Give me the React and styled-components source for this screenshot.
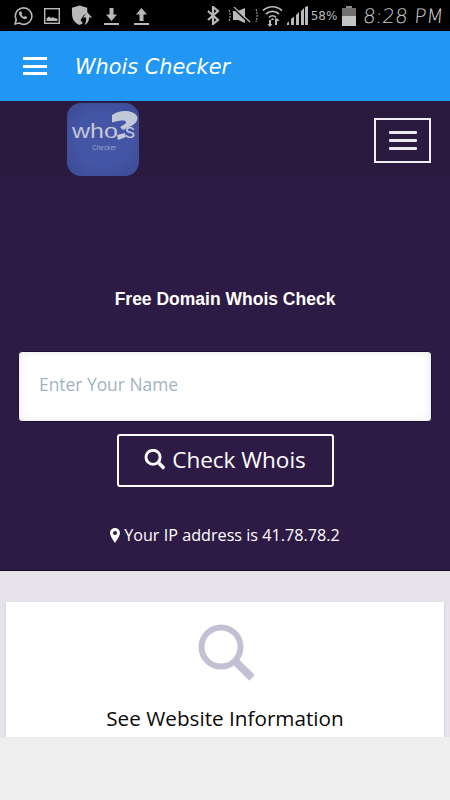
import React from "react";
import styled, { createGlobalStyle } from "styled-components";

const GlobalStyle = createGlobalStyle`
  html, body {
    margin: 0;
    padding: 0;
    background: #eeeeee;
  }
  * {
    box-sizing: border-box;
  }
`;

const Page = styled.div`
  width: 450px;
  height: 800px;
  display: flex;
  flex-direction: column;
  overflow: hidden;
  font-family: "Open Sans", "Noto Sans", sans-serif;
`;

const StatusBar = styled.div`
  height: 31px;
  flex: none;
  background: #000;
  display: flex;
  align-items: center;
  padding: 0 6px 0 13px;
  color: #b9b9b9;
`;

const StatusLeft = styled.div`
  display: flex;
  align-items: center;
  gap: 11px;
`;

const UploadSlot = styled.span`
  display: flex;
  margin-left: 4px;
`;

const StatusRight = styled.div`
  margin-left: auto;
  display: flex;
  align-items: center;
  gap: 4px;
`;

const Percent = styled.span`
  font-family: "DejaVu Sans", sans-serif;
  font-size: 12px;
  margin: 0 1px 0 -1px;
`;

const Clock = styled.span`
  font-family: "DejaVu Sans", sans-serif;
  font-size: 20px;
  font-weight: 200;
  color: #cfcfcf;
  margin-left: 3px;
  white-space: nowrap;
  transform: skewX(-5deg);
`;

const AppBar = styled.div`
  height: 70px;
  flex: none;
  background: #2196f3;
  display: flex;
  align-items: center;
  padding-left: 23px;
  gap: 28px;
`;

const MenuIcon = styled.div`
  width: 24px;
  height: 18px;
  display: flex;
  flex-direction: column;
  justify-content: space-between;
`;

const MenuLine = styled.span`
  display: block;
  height: 3px;
  background: #fff;
`;

const AppTitle = styled.div`
  font-family: "DejaVu Sans", sans-serif;
  font-style: italic;
  font-size: 20.8px;
  margin-top: 2px;
  color: #fff;
`;

const NavBar = styled.div`
  height: 75px;
  flex: none;
  background: #291a3e;
  display: flex;
  align-items: flex-start;
  justify-content: space-between;
  padding: 2px 19px 0 67px;
`;

const LogoTile = styled.div`
  width: 72px;
  height: 73px;
  border-radius: 14px;
  background: radial-gradient(circle, #4455a6 50%, #3c4a93 100%);
  overflow: hidden;
`;

const LogoWord = styled.text`
  font-family: "Liberation Sans", sans-serif;
  fill: #c3c8d8;
`;

const Toggler = styled.div`
  width: 57px;
  height: 45px;
  margin-top: 15px;
  border: 2px solid #f1eff4;
  display: flex;
  flex-direction: column;
  justify-content: center;
  align-items: center;
  gap: 5px;
`;

const TogglerLine = styled.span`
  display: block;
  width: 28px;
  height: 3px;
  border-radius: 1px;
  background: #ebe8ef;
`;

const Hero = styled.section`
  height: 395px;
  flex: none;
  background: #2d1b45;
  border-bottom: 1px solid #150c22;
  display: flex;
  flex-direction: column;
  align-items: center;
  padding: 113px 18px 0;
`;

const HeroTitle = styled.h1`
  margin: 0;
  font-family: "Liberation Sans", sans-serif;
  font-size: 17.5px;
  line-height: 20px;
  font-weight: 700;
  color: #fff;
`;

const NameInput = styled.input`
  width: 100%;
  height: 71px;
  margin-top: 42px;
  border: 1px solid #1d1030;
  border-radius: 4px;
  background: #fff;
  box-shadow: inset 0 0 8px rgba(0, 0, 0, 0.1);
  padding: 0 20px 5px;
  font-family: "Open Sans", sans-serif;
  font-size: 17.4px;
  outline: none;
  &::placeholder {
    color: #9db5c2;
    opacity: 1;
  }
`;

const CheckButton = styled.button`
  width: 217px;
  height: 53px;
  margin-top: 12px;
  background: transparent;
  border: 2px solid #fff;
  border-radius: 3px;
  color: #fff;
  display: flex;
  align-items: center;
  justify-content: center;
  gap: 7px;
  font-family: "Open Sans", sans-serif;
  font-size: 22.5px;
  padding: 0 0 3px;
`;

const IpLine = styled.p`
  margin: 37px 0 0;
  display: flex;
  align-items: center;
  gap: 4px;
  font-family: "Open Sans", sans-serif;
  font-size: 16.2px;
  line-height: 22px;
  color: #fff;
`;

const Features = styled.section`
  flex: 1;
  min-height: 0;
  overflow: hidden;
  background: #e6e3eb;
  padding: 31px 6px 0;
`;

const FeatureCard = styled.div`
  height: 200px;
  background: #fff;
  box-shadow: 0 1px 2px rgba(70, 50, 110, 0.2);
  display: flex;
  flex-direction: column;
  align-items: center;
  padding-top: 22px;
`;

const FeatureTitle = styled.h2`
  margin: 22px 0 0;
  font-family: "Open Sans", sans-serif;
  font-size: 20.7px;
  line-height: 28px;
  font-weight: 500;
  color: #0a0a0a;
`;

const BottomStrip = styled.div`
  height: 63px;
  flex: none;
  background: #eeeeee;
`;

const SearchGlyph = ({ size, color, stroke }) => (
  <svg width={size} height={size} viewBox="-2 0 58 58" fill="none">
    <circle cx="23" cy="23" r="19.5" stroke={color} strokeWidth={stroke} />
    <path d="M36 36 L54 54" stroke={color} strokeWidth={stroke + 2} />
  </svg>
);

const PinGlyph = () => (
  <svg width="10" height="15" viewBox="0 0 10 15">
    <path
      fillRule="evenodd"
      fill="#fff"
      d="M5 0C2.2 0 0 2.2 0 5c0 2.6 3.4 7.8 5 10 1.6-2.2 5-7.4 5-10 0-2.800-2.200-5-5-5zm0 3a2 2 0 1 1 0 4 2 2 0 0 1 0-4z"
    />
  </svg>
);

const Whatsapp = () => (
  <svg width="20" height="20" viewBox="0 0 20 20" fill="none" stroke="currentColor">
    <path strokeWidth="1.6" d="M2 18l1.3-4.2A8.2 8.2 0 1 1 6.2 17z" />
    <path
      fill="currentColor"
      stroke="none"
      d="M7 5.500l1.200-.2 1 2.200-.7 1c.6 1.100 1.400 1.800 2.500 2.400l1-.9 2.100 1.100-.2 1.200c-.8 1-2.200 1-3.600.4-2-.9-3.500-2.500-4.200-4.400-.4-1.100-.1-2.100.9-2.800z"
    />
  </svg>
);

const PictureBox = () => (
  <svg width="16" height="16" viewBox="0 0 16 16" fill="none">
    <rect x="0.7" y="0.7" width="14.6" height="14.6" stroke="currentColor" strokeWidth="1.4" />
    <path fill="currentColor" d="M2.500 13v-2.500l2.500-2 2 1.500 1.500-.8 3 1 2 .6V13z" />
  </svg>
);

const Shield = () => (
  <svg width="22" height="21" viewBox="0 0 23 21">
    <path fill="currentColor" d="M9 0l8 2.500v5.500l-4 2.500-3 5 2.500 3-3.500 2C4 18.500 1 15 1 8V2.500z" />
    <path fill="currentColor" d="M17 7l5 5.500h-3c0 4-2 6.500-5 8 1.400-2 2-4.500 1.700-8H12.500z" />
  </svg>
);

const Transfer = ({ up }) => (
  <svg width="15" height="18" viewBox="0 0 15 18">
    <path
      fill="currentColor"
      d={up ? "M7.500 1L13 7.500H9.500V14h-4V7.500H2z" : "M5.500 1h4v6.500H13L7.500 14 2 7.500h3.500z"}
    />
    <rect x="0" y="16" width="15" height="2" fill="currentColor" />
  </svg>
);

const Bluetooth = () => (
  <svg width="18" height="19" viewBox="0 0 18 19" fill="none" stroke="currentColor" strokeWidth="2.2">
    <path d="M2 5l10 9-5 4V1l5 4-10 9" />
  </svg>
);

const Muted = () => (
  <svg width="30" height="17" viewBox="0 0 30 17" fill="none">
    <path fill="currentColor" d="M5 4h5l7-3v15l-7-3H5z" />
    <path stroke="#000" strokeWidth="1.4" d="M5 1l16 15" />
    <path stroke="currentColor" strokeWidth="1.2" d="M6 0l16 15" />
    <path stroke="currentColor" strokeDasharray="2 1" d="M1 3c1.500 3 1.500 8 0 11M28 2c1.500 4 1.500 9 0 13" />
  </svg>
);

const Wifi = () => (
  <svg width="21" height="22" viewBox="0 0 21 22" fill="none" stroke="currentColor" strokeWidth="1.7">
    <path d="M1 5.500c5.500-5 13.500-5 19 0M4 9c3.800-3.400 9.200-3.400 13 0M7 12.300c2-1.800 5-1.800 7 0" />
    <path fill="currentColor" stroke="none" d="M10.500 13l2 2h-4zM7 15h2v4h1.500L8 22l-2.500-3H7zM13 13.500h2v-.500l2.500 3H15v4h-2z" />
  </svg>
);

const Signal = () => (
  <svg width="21" height="19" viewBox="0 0 21 19">
    <path fill="currentColor" d="M0 19v-2l2-1.500V19zM4 19v-6l3-2.500V19zM9 19V9l3-3v13zM14 19V5l3-3v17zM18 19V1l3-1v19z" />
  </svg>
);

const Battery = () => (
  <svg width="14" height="20" viewBox="0 0 14 20">
    <rect x="4" y="0" width="6" height="2" fill="#8a8a8a" />
    <rect x="0" y="2" width="14" height="8" fill="#6f6f6f" />
    <rect x="0" y="10" width="14" height="10" fill="#c4c4c4" />
  </svg>
);

const WhoisLogo = () => (
  <svg width="72" height="73" viewBox="0 0 72 73">
    <LogoWord x="5" y="35" fontSize="20" textLength="46" lengthAdjust="spacingAndGlyphs">who</LogoWord>
    <LogoWord x="58" y="35" fontSize="20">s</LogoWord>
    <path fill="#c3c8d8" d="M45 12c8-6 21-5 25 1 2 5-3 9-8 11l-6 3-3-3 5-3c2-1.500 1-3.500-2-3.500-3 0-6 .5-11 2z" />
    <path fill="#c3c8d8" d="M50 32l8-2 1 4-8 3z" />
    <LogoWord x="25" y="47" fontSize="6.500" fillOpacity="0.7">Checker</LogoWord>
  </svg>
);

export default function App() {
  return (
    <Page>
      <GlobalStyle />
      <StatusBar>
        <StatusLeft>
          <Whatsapp />
          <PictureBox />
          <Shield />
          <Transfer />
          <UploadSlot>
            <Transfer up />
          </UploadSlot>
        </StatusLeft>
        <StatusRight>
          <Bluetooth />
          <Muted />
          <Wifi />
          <Signal />
          <Percent>58%</Percent>
          <Battery />
          <Clock>8:28 PM</Clock>
        </StatusRight>
      </StatusBar>
      <AppBar>
        <MenuIcon>
          <MenuLine />
          <MenuLine />
          <MenuLine />
        </MenuIcon>
        <AppTitle>Whois Checker</AppTitle>
      </AppBar>
      <NavBar>
        <LogoTile>
          <WhoisLogo />
        </LogoTile>
        <Toggler>
          <TogglerLine />
          <TogglerLine />
          <TogglerLine />
        </Toggler>
      </NavBar>
      <Hero>
        <HeroTitle>Free Domain Whois Check</HeroTitle>
        <NameInput placeholder="Enter Your Name" />
        <CheckButton>
          <SearchGlyph size={21} color="#fff" stroke={8} />
          Check Whois
        </CheckButton>
        <IpLine>
          <PinGlyph />
          Your IP address is 41.78.78.2
        </IpLine>
      </Hero>
      <Features>
        <FeatureCard>
          <SearchGlyph size={58} color="#c5bfd4" stroke={6} />
          <FeatureTitle>See Website Information</FeatureTitle>
        </FeatureCard>
      </Features>
      <BottomStrip />
    </Page>
  );
}
